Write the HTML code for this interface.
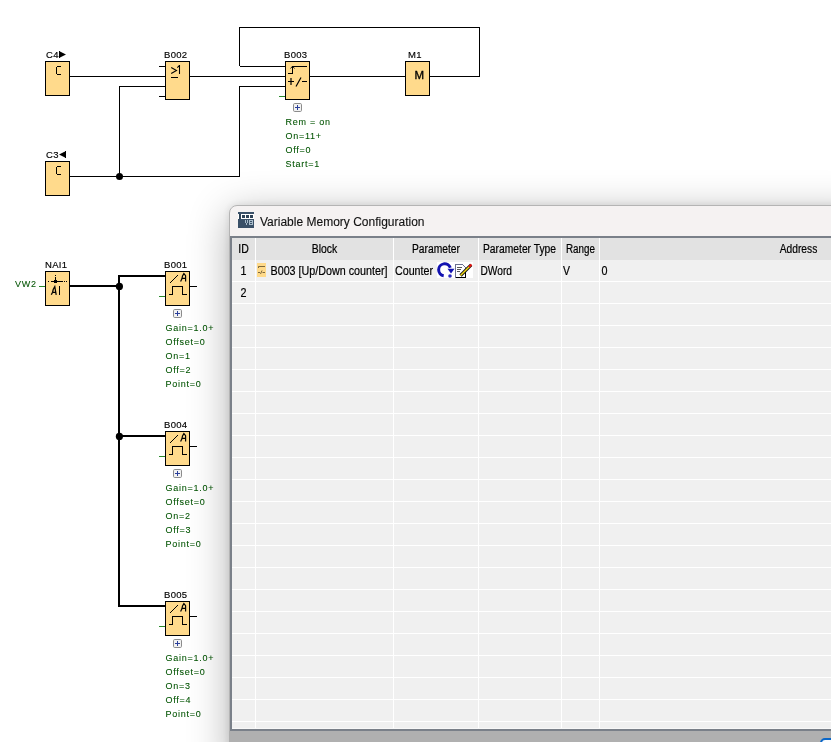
<!DOCTYPE html>
<html><head><meta charset="utf-8"><style>
html,body{margin:0;padding:0;width:831px;height:742px;overflow:hidden;background:#fff;font-family:"Liberation Sans",sans-serif;}
svg{position:absolute;left:0;top:0;will-change:transform;}
.lbl{font-family:"Liberation Sans",sans-serif;font-size:9.5px;letter-spacing:0.3px;fill:#000;stroke:#000;stroke-width:0.15px;}
.grn{font-family:"Liberation Sans",sans-serif;font-size:9px;letter-spacing:0.75px;fill:#005400;stroke:#005400;stroke-width:0.08px;}
.gt{font-family:"Liberation Sans",sans-serif;font-size:12px;fill:#000;stroke:#000;stroke-width:0.2px;}
#dlg{position:absolute;left:229px;top:205px;width:640px;height:560px;background:#f5f2f2;border:1px solid #b4b4b4;border-radius:8px 8px 0 0;box-shadow:0 8px 40px rgba(0,0,0,0.30),0 0 8px rgba(0,0,0,0.10);}
</style></head><body>
<svg width="831" height="742" viewBox="0 0 831 742">
<g shape-rendering="crispEdges">
<rect x="45.5" y="61.5" width="24" height="34" fill="#ffda8c" stroke="#000"/>
<rect x="165.5" y="61.5" width="24" height="38" fill="#ffda8c" stroke="#000"/>
<rect x="285.5" y="61.5" width="24" height="38" fill="#ffda8c" stroke="#000"/>
<rect x="405.5" y="61.5" width="24" height="34" fill="#ffda8c" stroke="#000"/>
<rect x="45.5" y="161.5" width="24" height="34" fill="#ffda8c" stroke="#000"/>
<rect x="45.5" y="271.5" width="24" height="34" fill="#ffda8c" stroke="#000"/>
<rect x="165.5" y="271.5" width="24" height="34" fill="#ffda8c" stroke="#000"/>
<rect x="165.5" y="431.5" width="24" height="34" fill="#ffda8c" stroke="#000"/>
<rect x="165.5" y="601.5" width="24" height="34" fill="#ffda8c" stroke="#000"/>
<path stroke="#000" fill="none" d="M70 76.5H165M159 66.5H165M159 96.5H165M120 86.5H165M119.5 86V176M70 176.5H239.5V86.5H285M190 76.5H285M239.5 66V27.5H479.5V76.5H430M239.5 66.5H285M310 76.5H405M190 286.5H197M190 446.5H197M190 616.5H197"/>
<path stroke="#000" stroke-width="2" fill="none" d="M70 286H119M119 275V607M118 276H165M118 436H165M118 606H165"/>
<path stroke="#2a8a2a" fill="none" d="M279 96.5H285M159 296.5H165M159 456.5H165M159 626.5H165M39 286.5H45"/>
</g>
<circle cx="119.5" cy="176.5" r="3.5" fill="#000"/>
<circle cx="119.4" cy="286.4" r="3.6" fill="#000"/>
<circle cx="119.4" cy="436.4" r="3.6" fill="#000"/>
<text class="lbl" x="46" y="58">C4</text>
<path d="M59 51V58H60V51ZM60 51.5V57.5L66 54.5Z" fill="#000"/>
<text class="lbl" x="46" y="158">C3</text>
<path d="M66 151V158H65V151ZM65 151.5V157.5L59 154.5Z" fill="#000"/>
<text class="lbl" x="164" y="58">B002</text>
<text class="lbl" x="284" y="58">B003</text>
<text class="lbl" x="408" y="58">M1</text>
<text class="lbl" x="45" y="268">NAI1</text>
<text class="lbl" x="164" y="268">B001</text>
<text class="lbl" x="164" y="428">B004</text>
<text class="lbl" x="164" y="598">B005</text>
<text class="grn" x="15" y="287">VW2</text>
<g fill="none" stroke="#000" shape-rendering="crispEdges">
<path d="M61 66.5H57M56.5 67V74M57 74.5H61"/>
<path d="M61 166.5H57M56.5 167V174M57 174.5H61"/>
</g>
<text class="lbl" x="414.5" y="79" style="font-size:11.5px;letter-spacing:0;stroke:#000;stroke-width:0.35px">M</text>
<path d="M171.2 67.5L176.5 70.5L171.2 73.5M179.5 65V74M177.3 67.6L179.5 65.4" stroke="#000" stroke-width="1.05" fill="none"/>
<path d="M171 77.5H178" stroke="#000" shape-rendering="crispEdges"/>
<path d="M288 73.5H292.5V66.5H307" stroke="#000" fill="none" shape-rendering="crispEdges"/>
<path d="M290.5 68.5L292.5 66.2L294.5 68.5" stroke="#000" stroke-width="0.9" fill="none"/>
<path d="M288 81.5H294M291 78V85M296 86.5L301 77.5M302 81.5H307" stroke="#000" stroke-width="1.2" fill="none"/>
<g shape-rendering="crispEdges" fill="#000"><rect x="48" y="281" width="1" height="1"/><rect x="51" y="281" width="12" height="1"/><rect x="64" y="281" width="1" height="1"/><rect x="66" y="281" width="1" height="1"/><rect x="55" y="277" width="1" height="4"/><rect x="55" y="275" width="1" height="1"/><rect x="54" y="280" width="3" height="3"/><rect x="59" y="286" width="1" height="9"/></g>
<path d="M51.3 294.8L52.6 292.2L53.2 289.5L54.8 286.6L56.2 294.8M52.6 292.3H56" stroke="#000" stroke-width="1.25" fill="none"/>
<path d="M170 283L178 275" stroke="#000" fill="none"/>
<path d="M169 294.5H172.5V286.5H182.5V294.5H187" stroke="#000" fill="none" shape-rendering="crispEdges"/>
<path d="M180.6 281.6L181.9 278.8L182.5 276L183.9 273.6L185.6 275.6V281.6M181.8 278.4H185.5" stroke="#000" stroke-width="1.2" fill="none"/>
<path d="M170 443L178 435" stroke="#000" fill="none"/>
<path d="M169 454.5H172.5V446.5H182.5V454.5H187" stroke="#000" fill="none" shape-rendering="crispEdges"/>
<path d="M180.6 441.6L181.9 438.8L182.5 436L183.9 433.6L185.6 435.6V441.6M181.8 438.4H185.5" stroke="#000" stroke-width="1.2" fill="none"/>
<path d="M170 613L178 605" stroke="#000" fill="none"/>
<path d="M169 624.5H172.5V616.5H182.5V624.5H187" stroke="#000" fill="none" shape-rendering="crispEdges"/>
<path d="M180.6 611.6L181.9 608.8L182.5 606L183.9 603.6L185.6 605.6V611.6M181.8 608.4H185.5" stroke="#000" stroke-width="1.2" fill="none"/>
<rect x="293.5" y="103.5" width="8" height="8" rx="1.2" fill="#f2f2f2" stroke="#8c8c8c"/>
<path d="M297.5 105V110M295 107.5H300" stroke="#2a3f9a" shape-rendering="crispEdges"/>
<rect x="173.5" y="309.5" width="8" height="8" rx="1.2" fill="#f2f2f2" stroke="#8c8c8c"/>
<path d="M177.5 311V316M175 313.5H180" stroke="#2a3f9a" shape-rendering="crispEdges"/>
<rect x="173.5" y="469.5" width="8" height="8" rx="1.2" fill="#f2f2f2" stroke="#8c8c8c"/>
<path d="M177.5 471V476M175 473.5H180" stroke="#2a3f9a" shape-rendering="crispEdges"/>
<rect x="173.5" y="639.5" width="8" height="8" rx="1.2" fill="#f2f2f2" stroke="#8c8c8c"/>
<path d="M177.5 641V646M175 643.5H180" stroke="#2a3f9a" shape-rendering="crispEdges"/>
<text class="grn" x="285.5" y="125">Rem = on</text>
<text class="grn" x="285.5" y="139">On=11+</text>
<text class="grn" x="285.5" y="153">Off=0</text>
<text class="grn" x="285.5" y="167">Start=1</text>
<text class="grn" x="165.5" y="331">Gain=1.0+</text>
<text class="grn" x="165.5" y="345">Offset=0</text>
<text class="grn" x="165.5" y="359">On=1</text>
<text class="grn" x="165.5" y="373">Off=2</text>
<text class="grn" x="165.5" y="387">Point=0</text>
<text class="grn" x="165.5" y="491">Gain=1.0+</text>
<text class="grn" x="165.5" y="505">Offset=0</text>
<text class="grn" x="165.5" y="519">On=2</text>
<text class="grn" x="165.5" y="533">Off=3</text>
<text class="grn" x="165.5" y="547">Point=0</text>
<text class="grn" x="165.5" y="661">Gain=1.0+</text>
<text class="grn" x="165.5" y="675">Offset=0</text>
<text class="grn" x="165.5" y="689">On=3</text>
<text class="grn" x="165.5" y="703">Off=4</text>
<text class="grn" x="165.5" y="717">Point=0</text>
</svg>
<div id="dlg"></div>
<svg width="831" height="742" viewBox="0 0 831 742">
<g shape-rendering="crispEdges">
<rect x="238" y="212" width="16" height="16" fill="#3a5068"/>
<rect x="238" y="214" width="16" height="5" fill="#ffffff"/>
<path fill="#2e4257" d="M239 214h2v5h-2zM242 215h3v3h-3zM246 215h3v3h-3zM250 215h3v3h-3z"/>
<path fill="#a9bccb" d="M245 220h1v3h-1zM246 223h1v2h-1zM247 220h1v3h-1zM249 220h4v5h-4z"/>
<path fill="#3a5068" d="M250 221h2v1h-2zM250 223h2v1h-2z"/>
</g>
<text x="260" y="225.5" style="font-size:12px;fill:#111;stroke:#111;stroke-width:0.12px">Variable Memory Configuration</text>
<g shape-rendering="crispEdges">
<rect x="230" y="236" width="601" height="495" fill="#7a8089"/>
<rect x="232" y="238" width="599" height="491" fill="#f0f0f0"/>
<rect x="232" y="238" width="599" height="22" fill="#e2e2e2"/>
<rect x="232" y="281" width="599" height="1" fill="#fff"/>
<rect x="232" y="303" width="599" height="1" fill="#fff"/>
<rect x="232" y="325" width="599" height="1" fill="#fff"/>
<rect x="232" y="347" width="599" height="1" fill="#fff"/>
<rect x="232" y="369" width="599" height="1" fill="#fff"/>
<rect x="232" y="391" width="599" height="1" fill="#fff"/>
<rect x="232" y="413" width="599" height="1" fill="#fff"/>
<rect x="232" y="435" width="599" height="1" fill="#fff"/>
<rect x="232" y="457" width="599" height="1" fill="#fff"/>
<rect x="232" y="479" width="599" height="1" fill="#fff"/>
<rect x="232" y="501" width="599" height="1" fill="#fff"/>
<rect x="232" y="523" width="599" height="1" fill="#fff"/>
<rect x="232" y="545" width="599" height="1" fill="#fff"/>
<rect x="232" y="567" width="599" height="1" fill="#fff"/>
<rect x="232" y="589" width="599" height="1" fill="#fff"/>
<rect x="232" y="611" width="599" height="1" fill="#fff"/>
<rect x="232" y="633" width="599" height="1" fill="#fff"/>
<rect x="232" y="655" width="599" height="1" fill="#fff"/>
<rect x="232" y="677" width="599" height="1" fill="#fff"/>
<rect x="232" y="699" width="599" height="1" fill="#fff"/>
<rect x="232" y="721" width="599" height="1" fill="#fff"/>
<rect x="232" y="743" width="599" height="1" fill="#fff"/>
<rect x="255" y="238" width="1" height="491" fill="#fff"/>
<rect x="393" y="238" width="1" height="491" fill="#fff"/>
<rect x="478" y="238" width="1" height="491" fill="#fff"/>
<rect x="561" y="238" width="1" height="491" fill="#fff"/>
<rect x="599" y="238" width="1" height="491" fill="#fff"/>
<rect x="232" y="728" width="599" height="1" fill="#f8f8f8"/>
<rect x="229" y="731" width="602" height="11" fill="#b0b0b0"/>
<rect x="821" y="739" width="40" height="20" rx="4" fill="#fbfdff" stroke="#0a67c8" stroke-width="2" shape-rendering="auto"/>
</g>
<text class="gt" x="243.5" y="253" textLength="10.5" lengthAdjust="spacingAndGlyphs" text-anchor="middle">ID</text>
<text class="gt" x="324.5" y="253" textLength="25.5" lengthAdjust="spacingAndGlyphs" text-anchor="middle">Block</text>
<text class="gt" x="436" y="253" textLength="48" lengthAdjust="spacingAndGlyphs" text-anchor="middle">Parameter</text>
<text class="gt" x="519.5" y="253" textLength="73" lengthAdjust="spacingAndGlyphs" text-anchor="middle">Parameter Type</text>
<text class="gt" x="580.5" y="253" textLength="29" lengthAdjust="spacingAndGlyphs" text-anchor="middle">Range</text>
<text class="gt" x="798.5" y="253" textLength="37.5" lengthAdjust="spacingAndGlyphs" text-anchor="middle">Address</text>
<text class="gt" x="243.5" y="275" textLength="6" lengthAdjust="spacingAndGlyphs" text-anchor="middle">1</text>
<text class="gt" x="243.5" y="297" textLength="6" lengthAdjust="spacingAndGlyphs" text-anchor="middle">2</text>
<text class="gt" x="270.5" y="275" textLength="117" lengthAdjust="spacingAndGlyphs" text-anchor="start">B003 [Up/Down counter]</text>
<text class="gt" x="395" y="275" textLength="38" lengthAdjust="spacingAndGlyphs" text-anchor="start">Counter</text>
<text class="gt" x="480.5" y="275" textLength="31.5" lengthAdjust="spacingAndGlyphs" text-anchor="start">DWord</text>
<text class="gt" x="563" y="275" textLength="7" lengthAdjust="spacingAndGlyphs" text-anchor="start">V</text>
<text class="gt" x="601.5" y="275" textLength="6" lengthAdjust="spacingAndGlyphs" text-anchor="start">0</text>
<rect x="257" y="263" width="9" height="14" fill="#ffda8a" shape-rendering="crispEdges"/>
<path d="M258.5 268V266.5H265M258 272.5H260M260.5 274L262 270.5M262.5 272.5H265" stroke="#5a4a2a" stroke-width="0.8" fill="none"/>
<rect x="437" y="262" width="36" height="16" fill="#fff" shape-rendering="crispEdges"/>
<path d="M443.7 275.7A6 6 0 1 1 450.3 267.8" stroke="#1212b0" stroke-width="3" fill="none"/>
<path d="M447.5 268.8L454.5 268.8L451 273.5Z" fill="#1212b0"/>
<circle cx="450" cy="276" r="1.8" fill="#2a2ac0"/>
<path d="M455.5 264.5H462.5L465.5 267.5V277.5H455.5Z" fill="#fff" stroke="#6a7090" shape-rendering="crispEdges"/>
<path d="M456 277.5H465.5V272" stroke="#000" fill="none" shape-rendering="crispEdges"/>
<path d="M457 267.5H462M457 269.5H461M457 271.5H460" stroke="#555" shape-rendering="crispEdges"/>
<path d="M460.5 275.5L471.2 264.8" stroke="#111" stroke-width="3.2"/>
<path d="M460.5 275.5L471 265" stroke="#f5dc10" stroke-width="1.5"/>
<path d="M469 267L471.5 264.5" stroke="#e01010" stroke-width="2.2"/>
</svg>
</body></html>
